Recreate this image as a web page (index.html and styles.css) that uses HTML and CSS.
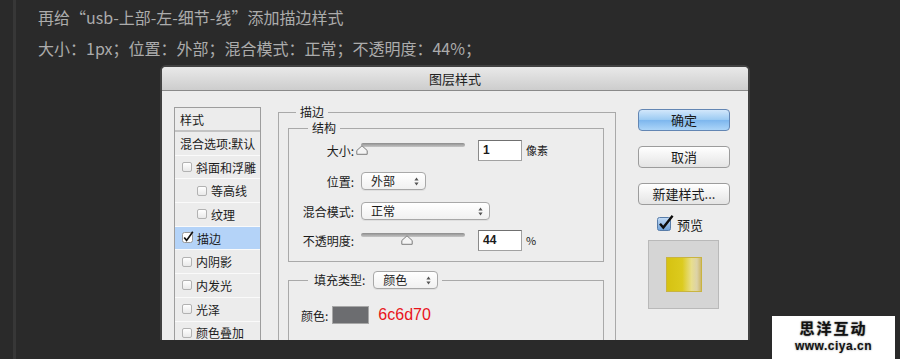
FILE: index.html
```html
<!DOCTYPE html>
<html lang="zh-CN">
<head>
    <meta charset="UTF-8">
    <meta name="viewport" content="width=device-width, initial-scale=1.0">
    <title>图层样式 - 描边</title>
    <link rel="stylesheet" href="styles.css">
</head>
<body>
    <div class="page">
        <p class="note">再给“usb-上部-左-细节-线”添加描边样式</p>
        <p class="note">大小：1px；位置：外部；混合模式：正常；不透明度：44%；</p>

        <div class="dialog">
            <div class="dialog-title">图层样式</div>

            <div class="dialog-body">
                <!-- Style list on the left -->
                <ul class="style-list">
                    <li class="list-head">样式</li>
                    <li class="list-blend">混合选项:默认</li>
                    <li><span class="cb"></span>斜面和浮雕</li>
                    <li class="sub"><span class="cb"></span>等高线</li>
                    <li class="sub"><span class="cb"></span>纹理</li>
                    <li class="active">
                        <svg class="cb-on" width="12" height="12" viewBox="0 0 12 12">
                            <rect x="0.5" y="1.5" width="10" height="10" rx="2" fill="#fff" stroke="#9a9a9a"/>
                            <path d="M2.2 6.5 L4.6 9.4 L10.8 0.8" fill="none" stroke="#111" stroke-width="1.7"/>
                        </svg>描边
                    </li>
                    <li><span class="cb"></span>内阴影</li>
                    <li><span class="cb"></span>内发光</li>
                    <li><span class="cb"></span>光泽</li>
                    <li><span class="cb"></span>颜色叠加</li>
                </ul>

                <!-- Stroke settings -->
                <fieldset class="group outer">
                    <legend>描边</legend>

                    <fieldset class="group inner">
                        <legend>结构</legend>
                        <div class="row row-size">
                            <label>大小:</label>
                            <div class="slider">
                                <span class="track"></span>
                                <svg class="thumb thumb-size" width="12" height="10" viewBox="0 0 12 10">
                                    <path d="M6 0.8 L11.2 5.5 L11.2 9.3 L0.8 9.3 L0.8 5.5 Z" fill="#f4f4f4" stroke="#7c7c7c"/>
                                </svg>
                            </div>
                            <span class="num">1</span>
                            <span class="unit">像素</span>
                        </div>
                        <div class="row row-pos">
                            <label>位置:</label>
                            <div class="select s-short">外部
                                <svg width="5" height="9" viewBox="0 0 5 9"><path d="M2.5 0.5 L4.6 3.6 H0.4 Z M2.5 8.5 L4.6 5.4 H0.4 Z" fill="#555"/></svg>
                            </div>
                        </div>
                        <div class="row row-mode">
                            <label>混合模式:</label>
                            <div class="select s-long">正常
                                <svg width="5" height="9" viewBox="0 0 5 9"><path d="M2.5 0.5 L4.6 3.6 H0.4 Z M2.5 8.5 L4.6 5.4 H0.4 Z" fill="#555"/></svg>
                            </div>
                        </div>
                        <div class="row row-opacity">
                            <label>不透明度:</label>
                            <div class="slider">
                                <span class="track"></span>
                                <svg class="thumb thumb-opacity" width="12" height="10" viewBox="0 0 12 10">
                                    <path d="M6 0.8 L11.2 5.5 L11.2 9.3 L0.8 9.3 L0.8 5.5 Z" fill="#f4f4f4" stroke="#7c7c7c"/>
                                </svg>
                            </div>
                            <span class="num">44</span>
                            <span class="unit">%</span>
                        </div>
                    </fieldset>

                    <fieldset class="group fill">
                        <legend>
                            <span>填充类型:</span>
                            <div class="select s-short">颜色
                                <svg width="5" height="9" viewBox="0 0 5 9"><path d="M2.5 0.5 L4.6 3.6 H0.4 Z M2.5 8.5 L4.6 5.4 H0.4 Z" fill="#555"/></svg>
                            </div>
                        </legend>
                        <div class="row row-color">
                            <label>颜色:</label>
                            <span class="swatch"></span>
                            <span class="hex">6c6d70</span>
                        </div>
                    </fieldset>
                </fieldset>

                <!-- Buttons and preview -->
                <div class="actions">
                    <div class="btn btn-primary">确定</div>
                    <div class="btn">取消</div>
                    <div class="btn">新建样式...</div>
                    <div class="preview-check">
                        <svg width="17" height="16" viewBox="0 0 17 16">
                            <defs>
                                <linearGradient id="cbBlue" x1="0" y1="0" x2="0" y2="1">
                                    <stop offset="0" stop-color="#c4dcf6"/>
                                    <stop offset="1" stop-color="#6c9fd8"/>
                                </linearGradient>
                            </defs>
                            <rect x="0.5" y="2.5" width="13" height="13" rx="2" fill="url(#cbBlue)" stroke="#587ca8"/>
                            <path d="M3 8.8 L6.3 12.6 L15.6 0.8" fill="none" stroke="#0d0d0d" stroke-width="2.4"/>
                        </svg>
                        <span>预览</span>
                    </div>
                    <div class="preview-box">
                        <div class="preview-swatch"></div>
                    </div>
                </div>
            </div>
        </div>
    </div>

    <div class="watermark">
        <div class="wm-name">思洋互动</div>
        <div class="wm-url">www.ciya.cn</div>
    </div>
</body>
</html>
```

FILE: styles.css
```css
* {
    box-sizing: border-box;
}

/* Page */
body {
    margin: 0;
    height: 359px;
    overflow: hidden;
    position: relative;
    background: #2a2a2a;
    font-family: "Noto Sans CJK SC", "Noto Sans", sans-serif;
}

.page {
    height: 100%;
    margin-left: 13px;
    border-left: 3px solid #373737;
    padding: 2px 0 0 22px;
}

.note {
    margin: 0;
    font-size: 16px;
    line-height: 31px;
    color: #acacac;
}

/* Dialog frame */
.dialog {
    width: 590px;
    margin: 1px 0 0 122px;
    border: 2px solid #414141;
    border-bottom: none;
    border-radius: 6px 6px 0 0;
    background: #ededed;
    color: #1b1b1b;
    font-size: 12px;
    overflow: hidden;
}

.dialog-title {
    height: 24px;
    line-height: 23px;
    border-bottom: 1px solid #8a8a8a;
    background: linear-gradient(#e9e9e9, #cdcdcd);
    text-align: center;
    font-size: 13px;
    color: #222;
}

.dialog-body {
    display: flex;
    align-items: flex-start;
    height: 249px;
    padding: 14px 0 0 12px;
    overflow: hidden;
}

/* Left style list */
.style-list {
    width: 87px;
    margin: 2px 0 0;
    padding: 0;
    list-style: none;
    border: 1px solid #9d9d9d;
    background: #ececec;
}

.style-list li {
    display: flex;
    align-items: center;
    gap: 4px;
    height: 23.7px;
    padding-left: 7px;
    border-bottom: 1px solid #fafafa;
    white-space: nowrap;
}

.style-list .list-head {
    height: 24px;
    padding-left: 5px;
    border-bottom: 2px solid #c3c3c3;
}

.style-list .list-blend {
    padding-left: 5px;
}

.style-list .sub {
    padding-left: 22px;
}

.style-list .active {
    background: #b4d3f8;
    gap: 3px;
}

.cb {
    width: 10px;
    height: 10px;
    border: 1px solid #b2b2b2;
    border-radius: 2px;
    background: linear-gradient(#fff, #e9e9e9);
}

.cb-on {
    margin-top: -2px;
}

/* Fieldsets */
.group {
    margin: 0;
    padding: 0;
    min-width: 0;
    border: 1px solid #a9a9a9;
}

.group legend {
    padding: 0 4px;
    line-height: 14px;
}

.outer {
    width: 338px;
    margin-left: 17px;
    padding: 0 11px 40px 9px;
}

.outer > legend {
    margin-left: 8px;
}

.inner {
    margin-top: 2px;
    padding: 0 0 6px;
}

.inner > legend {
    margin-left: 19px;
}

.fill {
    margin-top: 9px;
    padding: 17px 0 40px 12px;
}

.fill > legend {
    display: flex;
    align-items: center;
    gap: 8px;
    margin-left: 7px;
    padding: 0 4px 0 6px;
    line-height: 18px;
}

/* Rows */
.row {
    display: flex;
    align-items: center;
}

.row label {
    width: 65px;
    margin-right: 7px;
    text-align: right;
    white-space: nowrap;
}

.row-size { height: 30px; }
.row-pos { height: 32px; }
.row-mode { height: 28px; }
.row-opacity { height: 30px; }

.row-color {
    height: 18px;
}

.row-color label {
    width: auto;
    margin-right: 4px;
    text-align: left;
}

/* Slider */
.slider {
    position: relative;
    width: 104px;
    height: 14px;
    margin-right: 13px;
}

.track {
    display: block;
    height: 4px;
    border-radius: 2px;
    background: linear-gradient(#8c8c8c, #c6c6c6);
}

.thumb {
    position: absolute;
    top: 2px;
}

.thumb-size { left: -5px; }
.thumb-opacity { left: 40px; }

.num {
    width: 44px;
    height: 21px;
    padding-left: 4px;
    border: 1px solid #a2a2a2;
    border-top-color: #707070;
    border-left-color: #8a8a8a;
    background: #fff;
    font-family: "Liberation Sans", Arial, sans-serif;
    font-weight: bold;
    font-size: 12px;
    line-height: 19px;
}

.unit {
    margin-left: 4px;
    font-size: 11px;
}

/* Select */
.select {
    display: flex;
    align-items: center;
    justify-content: space-between;
    height: 18px;
    padding: 0 6px 0 9px;
    border: 1px solid #a8a8a8;
    border-radius: 4px;
    background: linear-gradient(#ffffff, #f1f1f1);
    box-shadow: 0 1px 0 rgba(0, 0, 0, 0.06);
    line-height: 16px;
}

.s-short { width: 65px; }
.s-long { width: 129px; }

/* Color swatch */
.swatch {
    width: 37px;
    height: 18px;
    border: 1px solid #a7a7a7;
    background: #6c6d70;
}

.hex {
    margin-left: 9px;
    font-family: "Liberation Sans", Arial, sans-serif;
    font-size: 16px;
    color: #e8141b;
}

/* Right column */
.actions {
    display: flex;
    flex-direction: column;
    width: 92px;
    margin: 4px 0 0 22px;
}

.btn {
    height: 22px;
    border: 1px solid #9c9c9c;
    border-radius: 4px;
    background: linear-gradient(#ffffff, #e4e4e4);
    text-align: center;
    font-size: 13px;
    line-height: 20px;
    color: #1a1a1a;
}

.btn + .btn {
    margin-top: 15px;
}

.btn-primary {
    border-color: #6386b3;
    background: linear-gradient(#d2e7fb, #9ccbf3 48%, #7eb7ee 52%, #acd5f8);
}

.preview-check {
    display: flex;
    align-items: center;
    gap: 3px;
    height: 16px;
    margin-top: 11px;
    padding-left: 19px;
    font-size: 13px;
}

.preview-check svg {
    margin-top: -3px;
}

.preview-box {
    display: flex;
    align-items: center;
    justify-content: center;
    width: 71px;
    height: 69px;
    margin: 8px 0 0 10px;
    border: 1px solid #b9b9b9;
    background: #d5d5d5;
}

.preview-swatch {
    width: 36px;
    height: 35px;
    border: 1px solid #c9b440;
    background: linear-gradient(90deg, #d6c212 0%, #dccb1e 45%, #e8de8c 72%, #dcd2a8 88%, #cdb86a 100%);
}

/* Watermark in the corner */
.watermark {
    position: absolute;
    right: 5px;
    bottom: 0;
    width: 123px;
    height: 43px;
    padding-top: 1px;
    background: #fff;
    text-align: center;
    color: #111;
    font-weight: bold;
}

.wm-name {
    font-size: 15px;
    line-height: 22px;
    letter-spacing: 2px;
    text-shadow: 0 0 2px #888, 0 0 1px #888;
}

.wm-url {
    font-family: "Liberation Sans", Arial, sans-serif;
    font-size: 12px;
    line-height: 14px;
    letter-spacing: 0.5px;
    text-shadow: 0 0 2px #888;
}
```
